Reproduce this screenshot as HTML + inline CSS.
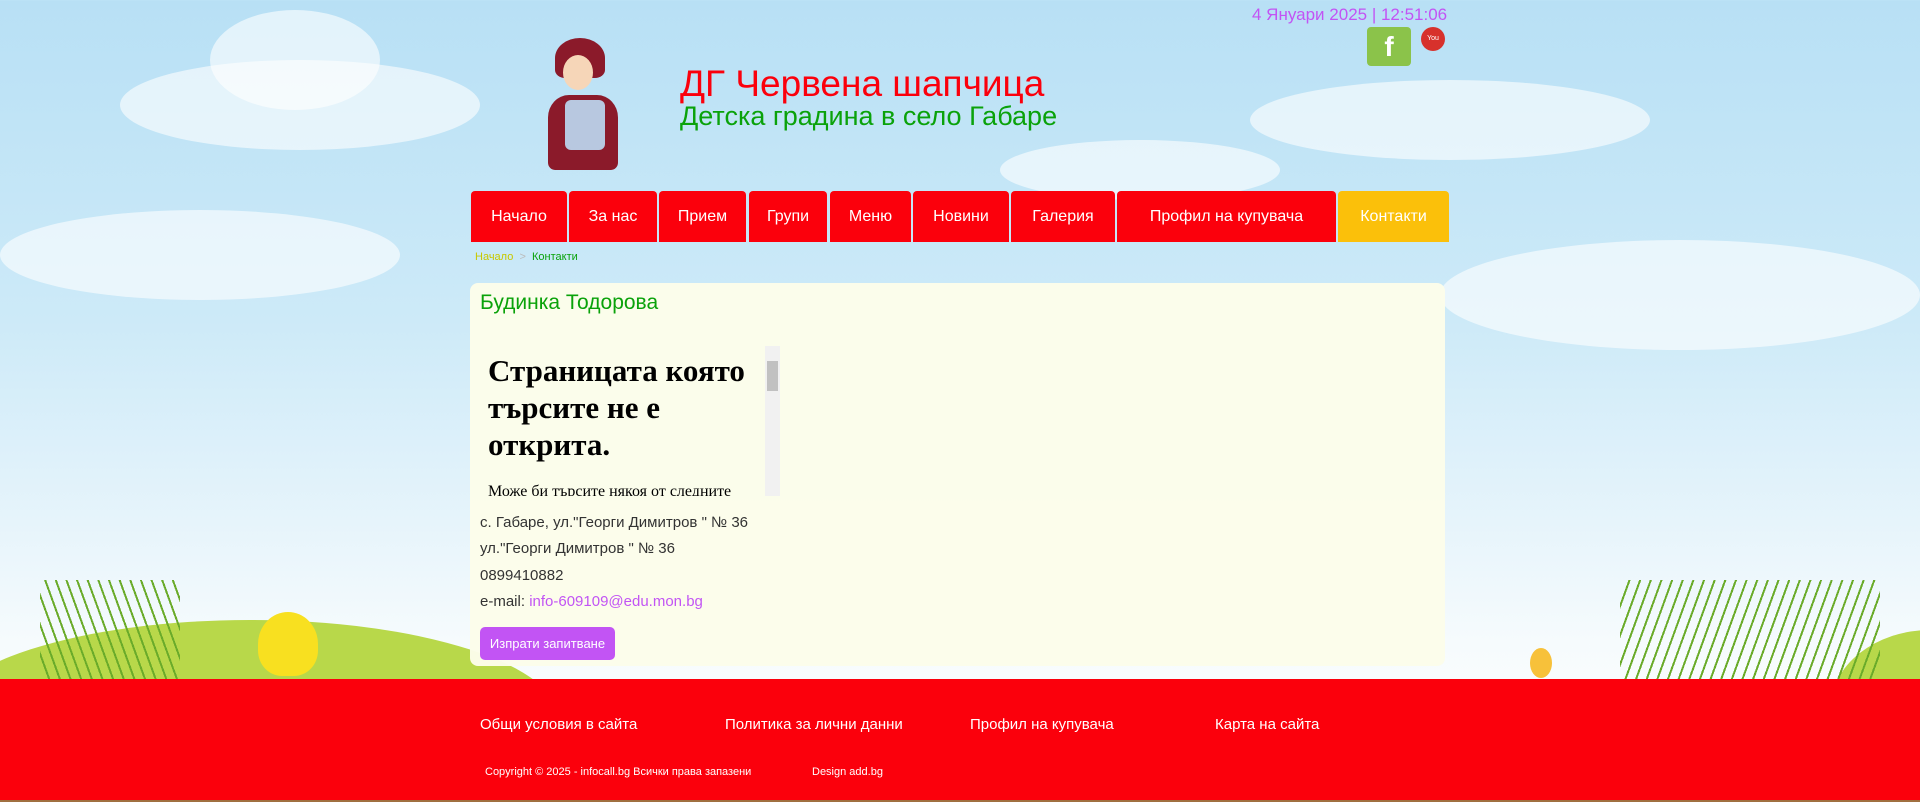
<!DOCTYPE html>
<html><head><meta charset="utf-8"><style>
*{margin:0;padding:0;box-sizing:border-box}
html,body{width:1920px;height:802px;overflow:hidden}
body{font-family:"Liberation Sans",sans-serif;position:relative;background:linear-gradient(#b8e0f5 0%,#cdeaf8 40%,#e6f4fb 65%,#f6fbfd 80%,#fff 100%)}
.a{position:absolute}
.cl{position:absolute;background:#fff;border-radius:50%;opacity:.6}
.nav a{position:absolute;top:191px;height:51px;background:#fb000c;color:#fff;font-size:16px;display:flex;align-items:center;justify-content:center;border-radius:4px 4px 0 0;text-decoration:none}
</style></head><body>
<div class="cl" style="left:120px;top:60px;width:360px;height:90px"></div>
<div class="cl" style="left:210px;top:10px;width:170px;height:100px"></div>
<div class="cl" style="left:0;top:210px;width:400px;height:90px"></div>
<div class="cl" style="left:1250px;top:80px;width:400px;height:80px"></div>
<div class="cl" style="left:1440px;top:240px;width:480px;height:110px"></div>
<div class="cl" style="left:1000px;top:140px;width:280px;height:60px"></div>
<div class="a" style="left:-60px;top:620px;width:620px;height:200px;border-radius:50%;background:#b8d84a"></div>
<div class="a" style="left:1830px;top:630px;width:200px;height:160px;border-radius:50%;background:#b8d84a"></div>
<div class="a" style="left:40px;top:580px;width:140px;height:100px;background:repeating-linear-gradient(70deg,transparent 0 8px,#6aab2a 8px 10px)"></div>
<div class="a" style="left:1620px;top:580px;width:260px;height:100px;background:repeating-linear-gradient(110deg,transparent 0 8px,#6aab2a 8px 10px)"></div>
<div class="a" style="left:258px;top:612px;width:60px;height:64px;border-radius:50% 50% 40% 40%;background:#f8e020"></div>
<div class="a" style="left:1530px;top:648px;width:22px;height:30px;border-radius:50%;background:#f7c13a"></div>
<div class="a" style="left:555px;top:38px;width:50px;height:40px;border-radius:50% 50% 20% 20%;background:#8b1a2a"></div>
<div class="a" style="left:563px;top:55px;width:30px;height:35px;border-radius:50%;background:#f6d6b8"></div>
<div class="a" style="left:548px;top:95px;width:70px;height:75px;border-radius:30% 30% 10% 10%;background:#8b1a2a"></div>
<div class="a" style="left:565px;top:100px;width:40px;height:50px;background:#b8c8e0;border-radius:6px"></div>
<div class="a" style="left:1252px;top:5px;font-size:17px;color:#c254f4">4 Януари 2025 | 12:51:06</div>
<div class="a" style="left:1367px;top:27px;width:44px;height:39px;background:#8bc34a;border-radius:4px;color:#fff;font-weight:bold;font-size:28px;text-align:center;line-height:40px">f</div>
<div class="a" style="left:1421px;top:27px;width:24px;height:24px;border-radius:50%;background:#d7312c;color:#fff;font-size:7px;text-align:center;line-height:24px">You</div>
<div class="a" style="left:680px;top:63px;font-size:37px;color:#fb000c">ДГ Червена шапчица</div>
<div class="a" style="left:680px;top:101px;font-size:27px;color:#0aa20a">Детска градина в село Габаре</div>
<div class="nav">
<a style="left:471px;width:96px">Начало</a>
<a style="left:569px;width:88px">За нас</a>
<a style="left:659px;width:87px">Прием</a>
<a style="left:749px;width:78px">Групи</a>
<a style="left:830px;width:81px">Меню</a>
<a style="left:913px;width:96px">Новини</a>
<a style="left:1011px;width:104px">Галерия</a>
<a style="left:1117px;width:219px">Профил на купувача</a>
<a style="left:1338px;width:111px;background:#fbc00a">Контакти</a>
</div>
<div class="a" style="left:475px;top:251px;font-size:11px"><span style="color:#c8c800">Начало</span> <span style="color:#bbb">&nbsp;&gt;&nbsp;</span> <span style="color:#0aa20a">Контакти</span></div>
<div class="a" style="left:470px;top:283px;width:975px;height:383px;background:#fcfdea;border-radius:8px;opacity:.97"></div>
<div class="a" style="left:480px;top:291px;font-size:21px;color:#0aa20a">Будинка Тодорова</div>
<div class="a" style="left:480px;top:346px;width:300px;height:150px;overflow:hidden">
<div style="position:absolute;left:8px;top:6px;width:275px;font-family:'Liberation Serif',serif;font-weight:bold;font-size:31px;line-height:37px;color:#000">Страницата която търсите не е открита.</div>
<div style="position:absolute;left:8px;top:137px;font-family:'Liberation Serif',serif;font-size:16px;color:#000;white-space:nowrap">Може би търсите някоя от следните</div>
<div style="position:absolute;left:285px;top:0;width:15px;height:150px;background:#f1f1f1"></div>
<div style="position:absolute;left:287px;top:15px;width:11px;height:30px;background:#c1c1c1"></div>
</div>
<div class="a" style="left:480px;top:510px;font-size:15px;color:#333;line-height:26.3px">с. Габаре, ул."Георги Димитров " № 36<br>ул."Георги Димитров " № 36<br>0899410882<br>e-mail: <span style="color:#c254f4">info-609109@edu.mon.bg</span></div>
<div class="a" style="left:480px;top:627px;width:135px;height:33px;background:#c254f4;border-radius:5px;color:#fff;font-size:13px;text-align:center;line-height:33px">Изпрати запитване</div>
<div class="a" style="left:0;top:679px;width:1920px;height:121px;background:#fb000c"></div>
<div class="a" style="left:0;top:800px;width:1920px;height:2px;background:#a07040"></div>
<div class="a" style="top:716px;left:480px;color:#fff;font-size:15px">Общи условия в сайта</div>
<div class="a" style="top:716px;left:725px;color:#fff;font-size:15px">Политика за лични данни</div>
<div class="a" style="top:716px;left:970px;color:#fff;font-size:15px">Профил на купувача</div>
<div class="a" style="top:716px;left:1215px;color:#fff;font-size:15px">Карта на сайта</div>
<div class="a" style="top:766px;left:485px;color:#fff;font-size:11px">Copyright © 2025 - infocall.bg Всички права запазени</div>
<div class="a" style="top:766px;left:812px;color:#fff;font-size:11px">Design add.bg</div>
</body></html>
